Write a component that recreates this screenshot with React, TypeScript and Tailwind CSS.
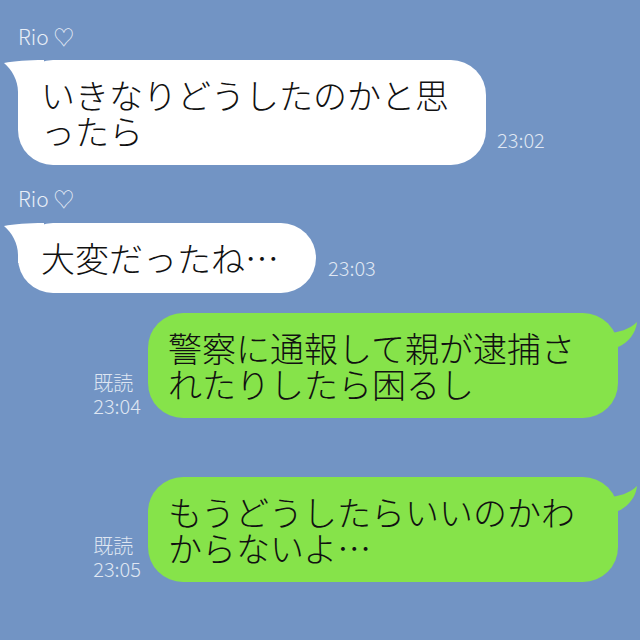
import React from "react";

function LeftTail() {
  return (
    <svg
      className="absolute left-[-14px] top-0"
      width="40"
      height="40"
      viewBox="0 0 40 40"
    >
      <path
        d="M0 3 C10 1 24 0 40 0 L40 40 L14 40 L14 32 C14 20 8 10 0 3 Z"
        fill="#ffffff"
      />
    </svg>
  );
}

function RightTail() {
  return (
    <svg
      className="absolute right-[-22px] top-0"
      width="42"
      height="40"
      viewBox="0 0 42 40"
    >
      <path
        d="M0 20 L10 20 C20 20 32 16 39 9 C38 20 30 30 20 34 L20 40 L0 40 Z"
        fill="#86e34a"
      />
    </svg>
  );
}

export default function App() {
  return (
    <div className="w-[640px] h-[640px] bg-[#7294c4] overflow-hidden flex flex-col font-['Noto_Sans_CJK_JP','Noto_Sans',sans-serif]">
      {/* Message 1 */}
      <div className="pl-[18px] mt-[24px] text-[21px] leading-[24px] text-[#e8eef7] font-light">
        Rio ♡
      </div>
      <div className="flex items-end gap-[11px] pl-[18px] mt-[12px]">
        <div className="relative w-[468px] bg-white rounded-[35px] pl-[23px] pt-[17px] pb-[16px] text-[34px] leading-[36px] text-[#111111] font-light">
          <LeftTail />
          <span className="relative">
            いきなりどうしたのかと思
            <br />
            ったら
          </span>
        </div>
        <div className="mb-[15px] text-[20px] leading-[20px] text-[#dfe6f2] font-light">
          23:02
        </div>
      </div>

      {/* Message 2 */}
      <div className="pl-[18px] mt-[21px] text-[21px] leading-[24px] text-[#e8eef7] font-light">
        Rio ♡
      </div>
      <div className="flex items-end gap-[12px] pl-[18px] mt-[13px]">
        <div className="relative w-[298px] bg-white rounded-[35px] pl-[23px] pt-[17px] pb-[17px] text-[34px] leading-[36px] text-[#111111] font-light">
          <LeftTail />
          <span className="relative">大変だったね…</span>
        </div>
        <div className="mb-[15px] text-[20px] leading-[20px] text-[#dfe6f2] font-light">
          23:03
        </div>
      </div>

      {/* Message 3 */}
      <div className="flex items-end justify-end gap-[7px] pr-[22px] mt-[20px]">
        <div className="mb-[1px] flex flex-col text-[20px] leading-[23px] text-[#dfe6f2] font-light">
          <span>既読</span>
          <span>23:04</span>
        </div>
        <div className="relative w-[470px] bg-[#86e34a] rounded-[35px] pl-[20px] pt-[17px] pb-[16px] text-[34px] leading-[36px] text-[#111111] font-light">
          <RightTail />
          <span className="relative">
            警察に通報して親が逮捕さ
            <br />
            れたりしたら困るし
          </span>
        </div>
      </div>

      {/* Message 4 */}
      <div className="flex items-end justify-end gap-[7px] pr-[22px] mt-[59px]">
        <div className="mb-[2px] flex flex-col text-[20px] leading-[23px] text-[#dfe6f2] font-light">
          <span>既読</span>
          <span>23:05</span>
        </div>
        <div className="relative w-[470px] bg-[#86e34a] rounded-[35px] pl-[20px] pt-[17px] pb-[16px] text-[34px] leading-[36px] text-[#111111] font-light">
          <RightTail />
          <span className="relative">
            もうどうしたらいいのかわ
            <br />
            からないよ…
          </span>
        </div>
      </div>
    </div>
  );
}
